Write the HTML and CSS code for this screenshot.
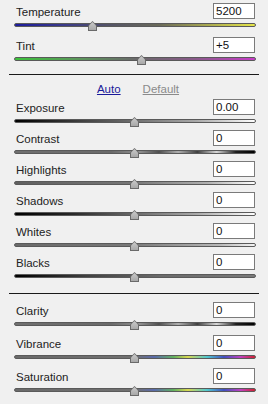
FILE: index.html
```html
<!DOCTYPE html>
<html>
<head>
<meta charset="utf-8">
<link rel="stylesheet" href="styles.css">
</head>
<body>
<div class="panel">
  <section class="group group-wb">
    <div class="slider">
      <div class="row"><span class="label">Temperature</span><span class="field">5200</span></div>
      <div class="track t-temp"><span class="thumb" style="left:73px"></span></div>
    </div>
    <div class="slider">
      <div class="row"><span class="label">Tint</span><span class="field">+5</span></div>
      <div class="track t-tint"><span class="thumb" style="left:122px"></span></div>
    </div>
  </section>
  <hr class="sep sep-1">
  <div class="links"><a class="auto">Auto</a><a class="default">Default</a></div>
  <section class="group group-tone">
    <div class="slider">
      <div class="row"><span class="label">Exposure</span><span class="field">0.00</span></div>
      <div class="track t-exposure"><span class="thumb" style="left:115px"></span></div>
    </div>
    <div class="slider">
      <div class="row"><span class="label">Contrast</span><span class="field">0</span></div>
      <div class="track t-contrast"><span class="thumb" style="left:115px"></span></div>
    </div>
    <div class="slider">
      <div class="row"><span class="label">Highlights</span><span class="field">0</span></div>
      <div class="track t-highlights"><span class="thumb" style="left:115px"></span></div>
    </div>
    <div class="slider">
      <div class="row"><span class="label">Shadows</span><span class="field">0</span></div>
      <div class="track t-shadows"><span class="thumb" style="left:115px"></span></div>
    </div>
    <div class="slider">
      <div class="row"><span class="label">Whites</span><span class="field">0</span></div>
      <div class="track t-whites"><span class="thumb" style="left:115px"></span></div>
    </div>
    <div class="slider">
      <div class="row"><span class="label">Blacks</span><span class="field">0</span></div>
      <div class="track t-blacks"><span class="thumb" style="left:115px"></span></div>
    </div>
  </section>
  <hr class="sep sep-2">
  <section class="group group-presence">
    <div class="slider">
      <div class="row"><span class="label">Clarity</span><span class="field">0</span></div>
      <div class="track t-clarity"><span class="thumb" style="left:115px"></span></div>
    </div>
    <div class="slider">
      <div class="row"><span class="label">Vibrance</span><span class="field">0</span></div>
      <div class="track t-vibrance"><span class="thumb" style="left:115px"></span></div>
    </div>
    <div class="slider">
      <div class="row"><span class="label">Saturation</span><span class="field">0</span></div>
      <div class="track t-saturation"><span class="thumb" style="left:115px"></span></div>
    </div>
  </section>
</div>
</body>
</html>
```

FILE: styles.css
```css
html, body {
  margin: 0;
  padding: 0;
  background: #f0f0f0;
}
body {
  width: 268px;
  height: 404px;
  overflow: hidden;
  font-family: "Liberation Sans", Arial, sans-serif;
  font-size: 11.5px;
  color: #222;
}
.panel {
  display: flex;
  flex-direction: column;
  padding-top: 3px;
}
.group {
  display: flex;
  flex-direction: column;
}
.group-wb { gap: 10px; }
.group-tone { gap: 7px; }
.group-presence { gap: 9px; }
.slider {
  display: flex;
  flex-direction: column;
  gap: 4px;
}
.row {
  display: flex;
  justify-content: space-between;
  align-items: center;
  padding: 0 13px 0 16px;
  height: 16px;
}
.label {
  line-height: 16px;
  padding-top: 2px;
}
.field {
  box-sizing: border-box;
  width: 42px;
  height: 16px;
  background: #fff;
  border: 1px solid #7a7a7a;
  padding: 0 0 0 2px;
  line-height: 14px;
  font-size: 11.5px;
  color: #111;
}
.track {
  position: relative;
  box-sizing: border-box;
  margin: 0 12px 0 14px;
  height: 4px;
  border: 1px solid #5a5a5a;
  border-radius: 2px;
}
.thumb {
  position: absolute;
  top: -3px;
  width: 9px;
  height: 10px;
  background: #6a6a6a;
  clip-path: polygon(50% 0, 100% 45%, 100% 100%, 0 100%, 0 45%);
}
.thumb::after {
  content: "";
  position: absolute;
  inset: 1px;
  background: linear-gradient(#cacaca, #a8a8a8);
  clip-path: polygon(50% 0, 100% 45%, 100% 100%, 0 100%, 0 45%);
}
.sep {
  margin: 0 9px;
  border: 0;
  height: 1px;
  background: #1a1a1a;
}
.sep-1 { margin-top: 13px; }
.sep-2 { margin-top: 15px; margin-bottom: 8px; }
.links {
  display: flex;
  justify-content: center;
  gap: 22px;
  padding: 7px 0 3px 8px;
  line-height: 14px;
}
.links a {
  text-decoration: underline;
}
.auto { color: #1a1a9a; }
.default { color: #8a8a8a; }

.t-temp { background: linear-gradient(90deg, #1c1c9c, #3a3a8a 20%, #555566 40%, #6a6a5a 60%, #a8a850 80%, #e6e64a); }
.t-tint { background: linear-gradient(90deg, #3cc23c, #5a9a5a 25%, #6a6a6a 50%, #8a5a8a 75%, #c83cc8); }
.t-exposure { background: linear-gradient(90deg, #000, #3a3a3a 25%, #707070 50%, #a8a8a8 75%, #fff); }
.t-contrast { background: linear-gradient(90deg, #707070 0%, #6a6a6a 40%, #909090 52%, #505050 60%, #b0b0b0 68%, #404040 76%, #d8d8d8 84%, #202020 92%, #000 100%); }
.t-highlights { background: linear-gradient(90deg, #606060, #787878 50%, #b0b0b0 80%, #fff); }
.t-shadows { background: linear-gradient(90deg, #000, #2a2a2a 25%, #6a6a6a 50%, #a8a8a8 75%, #fff); }
.t-whites { background: linear-gradient(90deg, #6a6a6a, #7a7a7a 50%, #b8b8b8 85%, #f4f4f4); }
.t-blacks { background: linear-gradient(90deg, #000, #404040 30%, #6a6a6a 60%, #7a7a7a); }
.t-clarity { background: linear-gradient(90deg, #707070 0%, #6a6a6a 40%, #909090 52%, #505050 60%, #b0b0b0 68%, #404040 76%, #d8d8d8 84%, #202020 92%, #000 100%); }
.t-vibrance { background: linear-gradient(90deg, #6a6a6a, #707070 50%, #5a6aaa 58%, #60b060 66%, #d8d850 72%, #50c8d0 80%, #4050c0 87%, #c040c0 94%, #d02030); }
.t-saturation { background: linear-gradient(90deg, #6a6a6a, #707070 50%, #5a6aaa 58%, #60b060 66%, #d8d850 72%, #50c8d0 80%, #4050c0 87%, #c040c0 94%, #d02030); }
```
